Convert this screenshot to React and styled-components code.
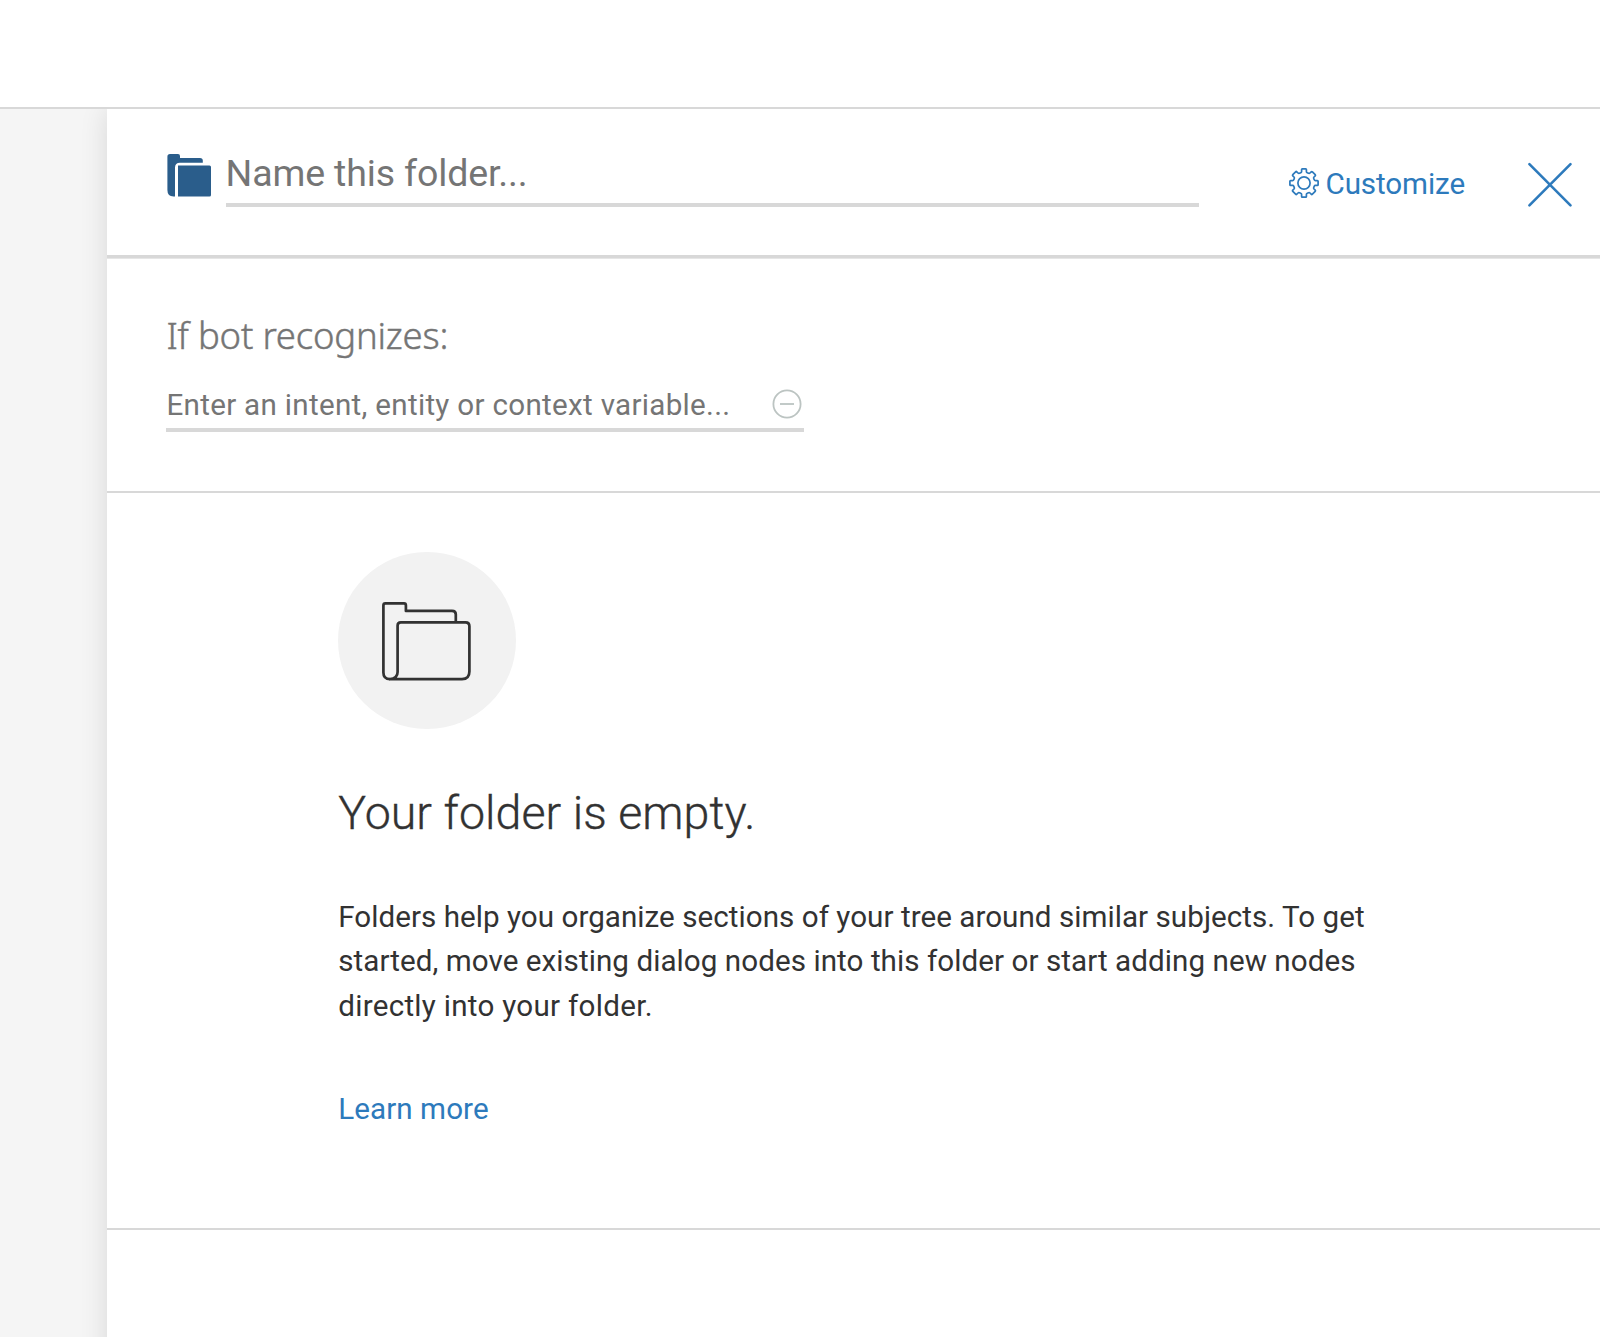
import React from "react";
import styled, { createGlobalStyle } from "styled-components";

const color = {
  blue: "#2d7abc",
  folder: "#2a5d8b",
  line: "#d8d8d8",
  hint: "#757575",
  ink: "#323232",
};

const GlobalStyle = createGlobalStyle`
  * { box-sizing: border-box; }
  body {
    margin: 0;
    background: #fff;
    color: ${color.ink};
    font-family: Roboto, "Open Sans", "Liberation Sans", sans-serif;
  }
  svg { display: block; flex: none; }
`;

const Page = styled.div`
  display: flex;
  flex-direction: column;
  width: 1600px;
  height: 1337px;
  overflow: hidden;
`;

const TopBar = styled.header`
  flex: none;
  height: 109px;
  background: #fff;
  border-bottom: 2px solid ${color.line};
`;

const Workspace = styled.main`
  flex: 1;
  display: flex;
  padding-left: 107px;
  background: #f5f5f5;
  overflow: hidden;
`;

const Panel = styled.section`
  flex: 1;
  margin-bottom: -40px;
  background: #fff;
  box-shadow: 0 0 26px rgba(0, 0, 0, 0.12);
`;

const PanelHeader = styled.div`
  display: flex;
  align-items: flex-start;
  height: 149px;
  padding-left: 60px;
  border-bottom: 3px solid ${color.line};
  box-shadow: 0 1px 0 #e6e6e6;
`;

const FolderMark = styled.div`
  width: 58.6px;
  padding-top: 45.4px;
`;

const NameField = styled.div`
  width: 973.4px;
  height: 98px;
  padding-top: 40px;
  border-bottom: 4px solid ${color.line};
  color: ${color.hint};
  font-size: 37.5px;
  line-height: 48px;
  letter-spacing: -0.14px;
`;

const Customize = styled.button`
  display: flex;
  align-items: center;
  gap: 6.5px;
  width: 177px;
  height: 40px;
  margin: 54.6px 0 0 90px;
  padding: 0;
  border: 0;
  background: none;
  color: ${color.blue};
  font: 29.6px/40px Roboto, "Open Sans", sans-serif;
  letter-spacing: -0.1px;

  svg { margin-top: -1.6px; }
`;

const CloseButton = styled.button`
  margin: 53px 0 0 61.4px;
  padding: 0;
  border: 0;
  background: none;
`;

const Condition = styled.div`
  height: 235px;
  padding: 52px 0 0 59.4px;
  border-bottom: 2px solid ${color.line};
`;

const ConditionTitle = styled.h2`
  margin: 0;
  color: ${color.hint};
  font: 300 36.5px/50px "Noto Sans", Roboto, sans-serif;
  letter-spacing: -0.2px;
  -webkit-text-stroke: 0.45px ${color.hint};
`;

const ConditionField = styled.div`
  display: flex;
  justify-content: space-between;
  width: 637.2px;
  height: 46px;
  margin-top: 26px;
  padding-right: 1.4px;
  border-bottom: 4px solid ${color.line};
  color: ${color.hint};
  font-size: 29.6px;
  line-height: 39px;
  letter-spacing: 0.3px;

  svg { margin-top: 2.8px; }
`;

const EmptyState = styled.div`
  display: flex;
  flex-direction: column;
  align-items: flex-start;
  height: 737px;
  padding: 59px 0 0 231.2px;
  border-bottom: 2px solid ${color.line};
`;

const Illustration = styled.div`
  display: grid;
  place-items: center;
  width: 177.4px;
  height: 177.4px;
  padding-top: 1px;
  border-radius: 50%;
  background: #f2f2f2;
`;

const EmptyTitle = styled.h1`
  margin: 53.6px 0 0;
  font-size: 46.5px;
  font-weight: 300;
  line-height: 60px;
  letter-spacing: 0.06px;
  -webkit-text-stroke: 0.35px ${color.ink};
`;

const EmptyText = styled.p`
  margin: 51.8px 0 0;
  font-size: 29.6px;
  line-height: 44.4px;
  white-space: nowrap;
`;

const TextLine = styled.span`
  display: block;
  letter-spacing: ${(p) => p.$tracking}px;
`;

const LearnMore = styled.a`
  margin-top: 58.6px;
  color: ${color.blue};
  font-size: 29.6px;
  line-height: 44.4px;
  letter-spacing: 0.08px;
`;

const FolderIcon = () => (
  <svg width="44" height="43" viewBox="0 0 44 43" fill={color.folder}>
    <path d="M3 0H11Q13 0 13 2V4H33Q35.8 4 35.8 6.6V8.8H13Q8 8.8 8 13.5V42.5H6.5Q0.4 42.5 0.4 36V2.8Q0.4 0 3 0Z" />
    <path d="M11 11.5H42.5Q44 11.5 44 13V41Q44 42.5 42.5 42.5H11Z" />
  </svg>
);

const GearIcon = () => (
  <svg width="30" height="30" viewBox="0 0 30 30" fill="none" stroke={color.blue} strokeWidth="1.7" strokeLinejoin="round">
    <path d="M12.6 1.6Q12.6 0.9 13.3 0.9H16.7Q17.4 0.9 17.4 1.6V3.6Q17.4 4.4 18.2 4.7L19.6 5.3Q20.4 5.6 21 5L22.2 3.8Q22.8 3.2 23.4 3.8L26.2 6.6Q26.8 7.2 26.2 7.8L25 9Q24.4 9.6 24.7 10.4L25.3 11.8Q25.6 12.6 26.4 12.6H28.4Q29.1 12.6 29.1 13.3V16.7Q29.1 17.4 28.4 17.4H26.4Q25.6 17.4 25.3 18.2L24.7 19.6Q24.4 20.4 25 21L26.2 22.2Q26.8 22.8 26.2 23.4L23.4 26.2Q22.8 26.8 22.2 26.2L21 25Q20.4 24.4 19.6 24.7L18.2 25.3Q17.4 25.6 17.4 26.4V28.4Q17.4 29.1 16.7 29.1H13.3Q12.6 29.1 12.6 28.4V26.4Q12.6 25.6 11.8 25.3L10.4 24.7Q9.6 24.4 9 25L7.8 26.2Q7.2 26.8 6.6 26.2L3.8 23.4Q3.2 22.8 3.8 22.2L5 21Q5.6 20.4 5.3 19.6L4.7 18.2Q4.4 17.4 3.6 17.4H1.6Q0.9 17.4 0.9 16.7V13.3Q0.9 12.6 1.6 12.6H3.6Q4.4 12.6 4.7 11.8L5.3 10.4Q5.6 9.6 5 9L3.8 7.8Q3.2 7.2 3.8 6.6L6.6 3.8Q7.2 3.2 7.8 3.8L9 5Q9.6 5.6 10.4 5.3L11.8 4.7Q12.6 4.4 12.6 3.6Z" />
    <circle cx="15" cy="15" r="6.1" />
  </svg>
);

const CloseIcon = () => (
  <svg width="46" height="46" viewBox="0 0 46 46" stroke={color.blue} strokeWidth="2.6" strokeLinecap="round">
    <path d="M2.4 2.2L43.5 43.3M43.5 2.2L2.4 43.3" />
  </svg>
);

const MinusIcon = () => (
  <svg width="30" height="30" viewBox="0 0 30 30" fill="none" stroke="#bcc4c2" strokeWidth="1.8">
    <circle cx="15" cy="15" r="13.6" />
    <path d="M8 15H22" />
  </svg>
);

const FoldersOutline = () => (
  <svg width="89" height="79" viewBox="0 0 89 79" fill="none" stroke={color.ink} strokeWidth="2.7" strokeLinejoin="round">
    <path d="M8 77.1Q1.4 77.1 1.4 70.5V3.4Q1.4 1.4 3.4 1.4H22Q23.9 1.4 23.9 3.4V8.9H70Q73.8 8.9 73.8 12.5V20.4" />
    <path d="M8 77.1Q15.6 76.5 15.6 70V23.6Q15.6 20.4 18.8 20.4H83.5Q87.4 20.4 87.4 24.3V69.5Q87.4 77.1 80 77.1Z" />
  </svg>
);

export default function App() {
  return (
    <Page>
      <GlobalStyle />
      <TopBar />
      <Workspace>
        <Panel>
          <PanelHeader>
            <FolderMark><FolderIcon /></FolderMark>
            <NameField>Name this folder...</NameField>
            <Customize><GearIcon />Customize</Customize>
            <CloseButton aria-label="Close"><CloseIcon /></CloseButton>
          </PanelHeader>
          <Condition>
            <ConditionTitle>If bot recognizes:</ConditionTitle>
            <ConditionField>
              <span>Enter an intent, entity or context variable...</span>
              <MinusIcon />
            </ConditionField>
          </Condition>
          <EmptyState>
            <Illustration><FoldersOutline /></Illustration>
            <EmptyTitle>Your folder is empty.</EmptyTitle>
            <EmptyText>
              <TextLine $tracking={0.04}>Folders help you organize sections of your tree around similar subjects. To get</TextLine>
              <TextLine $tracking={0.06}>started, move existing dialog nodes into this folder or start adding new nodes</TextLine>
              <TextLine $tracking={0.28}>directly into your folder.</TextLine>
            </EmptyText>
            <LearnMore>Learn more</LearnMore>
          </EmptyState>
        </Panel>
      </Workspace>
    </Page>
  );
}
